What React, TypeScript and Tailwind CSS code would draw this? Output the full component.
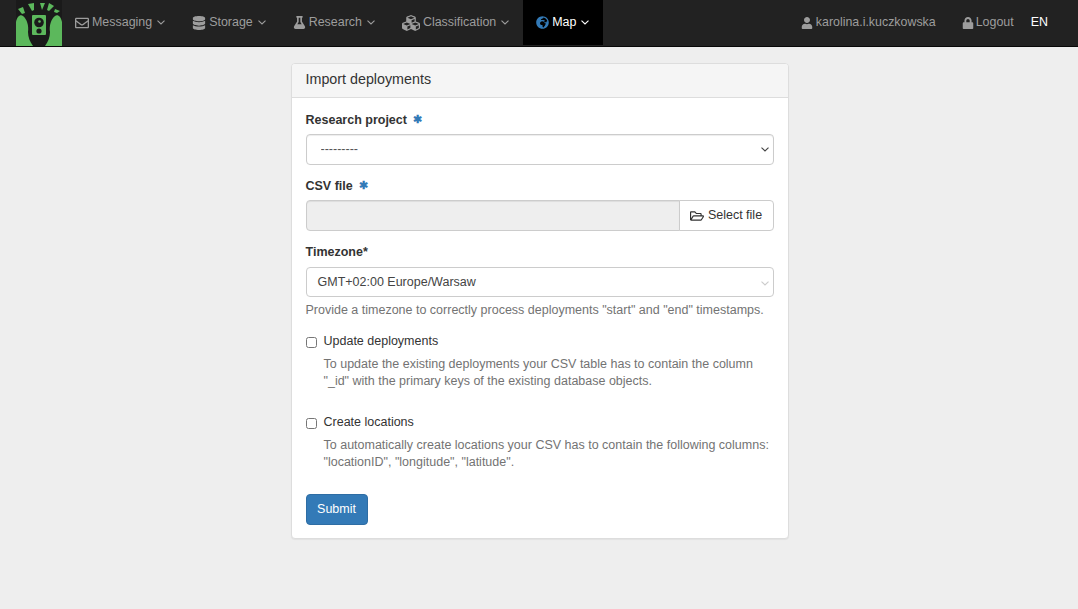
import { FaCubes, FaDatabase, FaFlask, FaGlobeAfrica, FaLock, FaRegEnvelope, FaRegFolderOpen, FaUser } from "react-icons/fa"

function Logo() {
  return (
    <svg width="46" height="46" viewBox="0 0 46 46" className="shrink-0">
      <rect width="46" height="46" fill="#1a1a1a" />
      <path d="M0 22 C1 17 4 14 7 16 C11 19 13 26 12 32 C12 37 14 42 17 46 H0 Z" fill="#5cb85c" />
      <path d="M46 22 C45 17 42 14 39 16 C35 19 33 26 34 32 C34 37 32 42 29 46 H46 Z" fill="#5cb85c" />
      <path d="M2 9 L7 7 L9 13 L6 14 Z" fill="#5cb85c" />
      <path d="M12 4 L18 3 L18 10 L16 11 Z" fill="#5cb85c" />
      <path d="M24 3 L29 3 L26 10 Z" fill="#5cb85c" />
      <path d="M33 3 L38 6 L33 11 L31 10 Z" fill="#5cb85c" />
      <path d="M39 9 L44 11 L41 13 L38 12 Z" fill="#5cb85c" />
      <rect x="16" y="15" width="14" height="20" rx="1" fill="#5cb85c" />
      <circle cx="23" cy="22.5" r="4.8" fill="#1a1a1a" />
      <circle cx="23.5" cy="21.5" r="1.3" fill="#5cb85c" />
      <circle cx="23" cy="31" r="2.6" fill="#1a1a1a" />
    </svg>
  )
}

function Caret({ className }: { className?: string }) {
  return (
    <svg width="8" height="5" viewBox="0 0 8 5" fill="none" stroke="currentColor" strokeWidth="1.1" className={className}>
      <path d="M0.5 0.6 L4 4 L7.5 0.6" />
    </svg>
  )
}

function NavItem({ icon, label, active }: { icon: React.ReactNode; label: string; active?: boolean }) {
  return (
    <div className={active ? "flex h-[45px] items-center gap-[3px] bg-black px-[13px] text-white" : "flex h-[45px] items-center gap-[3px] px-[13px] text-[#9d9d9d]"}>
      {icon}
      <span>{label}</span>
      <Caret className="ml-[2px] mr-[1px]" />
    </div>
  )
}

export default function App() {
  return (
    <div className="min-h-screen bg-[#eeeeee] font-['Liberation_Sans',Arial,sans-serif] text-[12.5px] leading-[17px] text-[#333333]">
      <nav className="flex h-[47px] items-start border-b border-[#080808] bg-[#222222] pl-[16px] text-[12.45px]">
        <Logo />
        <NavItem icon={<FaRegEnvelope size={14} />} label="Messaging" />
        <NavItem icon={<FaDatabase size={14} />} label="Storage" />
        <NavItem icon={<FaFlask size={13} />} label="Research" />
        <NavItem icon={<FaCubes size={18} />} label="Classification" />
        <NavItem icon={<FaGlobeAfrica size={13} className="text-[#337ab7]" />} label="Map" active />
        <div className="ml-auto flex h-[45px] items-center pr-[30px] text-[#9d9d9d]">
          <div className="flex items-center gap-[3px]">
            <FaUser size={12} />
            <span className="text-[12.4px]">karolina.i.kuczkowska</span>
          </div>
          <div className="ml-[26px] flex items-center gap-[2px]">
            <FaLock size={12} />
            <span>Logout</span>
          </div>
          <span className="ml-[17px] text-white">EN</span>
        </div>
      </nav>

      <main className="flex justify-center pl-[1px] pt-[16px]">
        <div className="h-[476px] w-[498px] rounded border border-[#dddddd] bg-white shadow-[0_1px_1px_rgba(0,0,0,0.05)]">
          <div className="flex h-[34px] items-center rounded-t-[3px] border-b border-[#dddddd] bg-[#f5f5f5] px-[14px] pb-[2px] text-[14.3px]">
            Import deployments
          </div>

          <form className="px-[14px] pt-[13px]">
            <label className="mb-[5px] block font-bold">
              Research project <span className="ml-[3px] align-[1px] text-[11px] text-[#337ab7]">✱</span>
            </label>
            <div className="relative">
              <select className="block h-[31px] w-full appearance-none rounded border border-[#cccccc] bg-white px-[14px] text-[#555555] shadow-[inset_0_1px_1px_rgba(0,0,0,0.075)]">
                <option>---------</option>
              </select>
              <Caret className="pointer-events-none absolute right-[5px] top-[13px] text-[#444444]" />
            </div>

            <label className="mb-[5px] mt-[12px] block font-bold">
              CSV file <span className="ml-[3px] align-[1px] text-[11px] text-[#337ab7]">✱</span>
            </label>
            <div className="flex h-[31px]">
              <div className="flex-1 rounded-l border border-[#cccccc] bg-[#eeeeee] shadow-[inset_0_1px_1px_rgba(0,0,0,0.075)]" />
              <div className="-ml-px flex w-[95px] items-center justify-center gap-[4px] rounded-r border border-[#cccccc] bg-white">
                <FaRegFolderOpen size={14} />
                <span>Select file</span>
              </div>
            </div>

            <label className="mb-[6px] mt-[13px] block font-bold">Timezone*</label>
            <div className="flex h-[30px] items-center justify-between rounded border border-[#cccccc] bg-white pl-[11px] pr-[4px] text-[#444444]">
              <span>GMT+02:00 Europe/Warsaw</span>
              <Caret className="mt-[3px] text-[#cccccc]" />
            </div>
            <p className="mt-[5px] text-[#737373]">
              Provide a timezone to correctly process deployments "start" and "end" timestamps.
            </p>

            <div className="mt-[14px] flex items-center gap-[7px]">
              <input type="checkbox" className="m-0 mt-[1px] h-[11px] w-[11px]" />
              <span>Update deployments</span>
            </div>
            <p className="ml-[18px] mt-[6px] text-[#737373]">
              To update the existing deployments your CSV table has to contain the column
              <br />
              "_id" with the primary keys of the existing database objects.
            </p>

            <div className="mt-[24px] flex items-center gap-[7px]">
              <input type="checkbox" className="m-0 mt-[1px] h-[11px] w-[11px]" />
              <span>Create locations</span>
            </div>
            <p className="ml-[18px] mt-[6px] text-[#737373]">
              To automatically create locations your CSV has to contain the following columns:
              <br />
              "locationID", "longitude", "latitude".
            </p>

            <button type="button" className="mt-[23px] h-[31px] w-[62px] rounded border border-[#2e6da4] bg-[#337ab7] text-white">
              Submit
            </button>
          </form>
        </div>
      </main>
    </div>
  )
}
